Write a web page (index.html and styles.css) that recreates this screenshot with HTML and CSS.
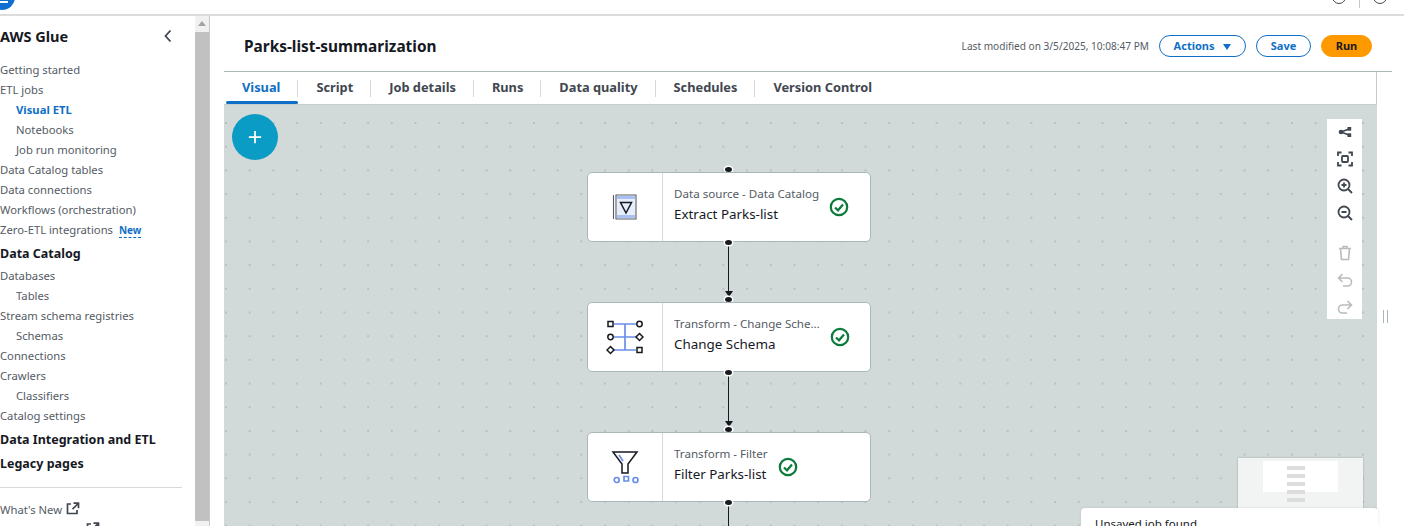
FILE: index.html
```html
<!DOCTYPE html>
<html>
<head>
    <title>AWS Glue - Parks-list-summarization</title>
    <link rel="stylesheet" href="styles.css">
</head>
<body>
    <!-- Top bar, cut off by the screenshot -->
    <header class="top-bar">
        <span class="top-logo"></span>
        <div class="top-icons">
            <span class="top-icon"></span>
            <span class="top-sep"></span>
            <span class="top-icon"></span>
        </div>
    </header>

    <div class="app">
        <nav class="sidebar">
            <div class="side-title">
                <span>AWS Glue</span>
                <svg class="side-close" viewBox="0 0 10 14"><path d="M7.5 1.5 2.5 7l5 5.5"/></svg>
            </div>
            <a class="nav-row">Getting started</a>
            <a class="nav-row">ETL jobs</a>
            <a class="nav-row sub active">Visual ETL</a>
            <a class="nav-row sub">Notebooks</a>
            <a class="nav-row sub">Job run monitoring</a>
            <a class="nav-row">Data Catalog tables</a>
            <a class="nav-row">Data connections</a>
            <a class="nav-row">Workflows (orchestration)</a>
            <a class="nav-row">Zero-ETL integrations <span class="new-tag">New</span></a>
            <div class="nav-head">Data Catalog</div>
            <a class="nav-row">Databases</a>
            <a class="nav-row sub">Tables</a>
            <a class="nav-row">Stream schema registries</a>
            <a class="nav-row sub">Schemas</a>
            <a class="nav-row">Connections</a>
            <a class="nav-row">Crawlers</a>
            <a class="nav-row sub">Classifiers</a>
            <a class="nav-row">Catalog settings</a>
            <div class="nav-head">Data Integration and ETL</div>
            <div class="nav-head short">Legacy pages</div>
            <hr class="side-rule">
            <a class="nav-row">What's New
                <svg class="ext-icon" viewBox="0 0 14 13"><path d="M5 2H1.5v9.5H11V8"/><path d="M7.5 1.2h5v5M12.2 1.5 6.5 7.2"/></svg>
            </a>
            <a class="nav-row">Documentation
                <svg class="ext-icon" viewBox="0 0 14 13"><path d="M5 2H1.5v9.5H11V8"/><path d="M7.5 1.2h5v5M12.2 1.5 6.5 7.2"/></svg>
            </a>
        </nav>

        <div class="scrollbar">
            <div class="scroll-up"></div>
            <div class="scroll-thumb"></div>
        </div>

        <main class="main">
            <div class="page-head">
                <h1>Parks-list-summarization</h1>
                <div class="head-actions">
                    <span class="modified">Last modified on 3/5/2025, 10:08:47 PM</span>
                    <button class="btn actions-btn">Actions <span class="caret"></span></button>
                    <button class="btn save-btn">Save</button>
                    <button class="btn run-btn">Run</button>
                </div>
            </div>

            <div class="tabs">
                <a class="tab active">Visual</a>
                <a class="tab">Script</a>
                <a class="tab">Job details</a>
                <a class="tab">Runs</a>
                <a class="tab">Data quality</a>
                <a class="tab">Schedules</a>
                <a class="tab last">Version Control</a>
            </div>

            <div class="canvas">
                <button class="add-btn">
                    <svg viewBox="0 0 16 16"><path d="M8 1v14M1 8h14"/></svg>
                </button>

                <div class="flow">
                    <div class="link stub"><span class="handle in"></span></div>

                    <div class="node">
                        <div class="node-icon">
                            <svg width="26" height="28" viewBox="0 0 26 28">
                                <path class="ic-blue-fill" d="M5 3h18v3H5zM5 22h18v3H5z"/>
                                <path class="ic-blue-soft" d="M5 6h18v16H5z"/>
                                <path class="ic-gray" d="M4 2h20v24H4zM1.500 2v24"/>
                                <path class="ic-dark" d="M8.500 9.500h11L14 20z"/>
                            </svg>
                        </div>
                        <div class="node-body">
                            <div class="node-text">
                                <div class="node-type">Data source - Data Catalog</div>
                                <div class="node-name">Extract Parks-list</div>
                            </div>
                            <svg class="status" viewBox="0 0 20 20"><circle cx="10" cy="10" r="8.200"/><path d="M6 10.500 9 13.300 14 7.500"/></svg>
                        </div>
                    </div>

                    <div class="link"><span class="handle out"></span><span class="arrow"></span><span class="handle in"></span></div>

                    <div class="node">
                        <div class="node-icon">
                            <svg width="38" height="36" viewBox="0 0 38 36">
                                <path class="ic-blue" d="M8 5h22M8 18h22M8 31h22M19 5v26"/>
                                <path class="ic-dark" d="M2 2.500h5v5H2z"/>
                                <circle class="ic-dark" cx="4.500" cy="18" r="2.700"/>
                                <path class="ic-dark" d="M4.500 27.500 8 31l-3.500 3.500L1 31z"/>
                                <circle class="ic-dark" cx="33.500" cy="5" r="2.700"/>
                                <path class="ic-dark" d="M33.500 14.500 37 18l-3.500 3.500L30 18z"/>
                                <path class="ic-dark" d="M31 28.500h5v5h-5z"/>
                            </svg>
                        </div>
                        <div class="node-body">
                            <div class="node-text">
                                <div class="node-type">Transform - Change Schema</div>
                                <div class="node-name">Change Schema</div>
                            </div>
                            <svg class="status" viewBox="0 0 20 20"><circle cx="10" cy="10" r="8.200"/><path d="M6 10.500 9 13.300 14 7.500"/></svg>
                        </div>
                    </div>

                    <div class="link"><span class="handle out"></span><span class="arrow"></span><span class="handle in"></span></div>

                    <div class="node">
                        <div class="node-icon">
                            <svg width="28" height="36" viewBox="0 0 28 36">
                                <path class="ic-dark" d="M2 3h24l-9 12v9h-6V15z"/>
                                <path class="ic-blue" d="M8 6l4 6"/>
                                <circle class="ic-blue" cx="5.700" cy="31" r="2.500"/>
                                <path class="ic-blue" d="M13 27.500h4.500V32H13z"/>
                                <circle class="ic-blue" cx="24.500" cy="31" r="2.500"/>
                            </svg>
                        </div>
                        <div class="node-body">
                            <div class="node-text">
                                <div class="node-type">Transform - Filter</div>
                                <div class="node-name">Filter Parks-list</div>
                            </div>
                            <svg class="status" viewBox="0 0 20 20"><circle cx="10" cy="10" r="8.200"/><path d="M6 10.500 9 13.300 14 7.500"/></svg>
                        </div>
                    </div>

                    <div class="link end"><span class="handle out"></span></div>
                </div>

                <div class="toolbar">
                    <svg class="tool" viewBox="0 0 16 16"><path d="M4 8l8-3M4 8l8 3"/><circle class="solid" cx="4" cy="8" r="2.300"/><rect class="solid" x="10.500" y="3" width="3.700" height="3.700"/><rect class="solid" x="10.500" y="9.300" width="3.700" height="3.700"/></svg>
                    <svg class="tool" viewBox="0 0 16 16"><path d="M1 5V1.500h3.500M11.500 1.500H15V5M15 11v3.500h-3.500M4.500 14.500H1V11"/><rect x="5" y="5" width="6" height="6" rx="1"/></svg>
                    <svg class="tool" viewBox="0 0 16 16"><circle cx="7" cy="7" r="5.500"/><path d="M11 11l4 4M7 4.500v5M4.500 7h5"/></svg>
                    <svg class="tool" viewBox="0 0 16 16"><circle cx="7" cy="7" r="5.500"/><path d="M11 11l4 4M4.500 7h5"/></svg>
                    <svg class="tool off gap" viewBox="0 0 16 16"><path d="M2 3.500h12M6 3.500V1.500h4v2M3.500 3.500l1 11h7l1-11"/></svg>
                    <svg class="tool off" viewBox="0 0 16 16"><path d="M5.500 2 1.500 6l4 4M1.500 6h9a4 4 0 0 1 0 8H6"/></svg>
                    <svg class="tool off" viewBox="0 0 16 16"><path d="M10.500 2l4 4-4 4M14.500 6h-9a4 4 0 0 0 0 8H10"/></svg>
                </div>

                <div class="minimap">
                    <div class="mini-view"></div>
                    <div class="mini-rows">
                        <span></span><span></span><span></span><span></span><span></span>
                    </div>
                </div>
            </div>

            <div class="side-handle"></div>

            <div class="flash">Unsaved job found</div>
        </main>
    </div>
</body>
</html>
```

FILE: styles.css
```css
* {
    box-sizing: border-box;
}

html, body {
    height: 528px;
}

body {
    margin: 0;
    overflow: hidden;
    background-color: #fff;
    color: #16191f;
    font-family: 'Noto Sans', sans-serif;
    font-size: 12px;
}

/* Top bar */
.top-bar {
    height: 16px;
    border-bottom: 2px solid #dcdcdc;
    display: flex;
    justify-content: space-between;
    overflow: hidden;
}

.top-logo {
    width: 26px;
    height: 26px;
    margin: -16px 0 0 -11px;
    border-radius: 50%;
    background-color: #0f6fd0;
    position: relative;
}

.top-logo::after {
    content: "";
    position: absolute;
    left: 10px;
    right: 7px;
    bottom: 7px;
    height: 2px;
    background-color: #fff;
}

.top-icons {
    display: flex;
    gap: 12px;
    margin-right: 17px;
}

.top-icon {
    width: 14px;
    height: 14px;
    margin-top: -10px;
    border: 1.5px solid #414750;
    border-radius: 50%;
}

.top-sep {
    width: 1px;
    height: 8px;
    margin: 0 1px;
    background-color: #c6c6cd;
}

.app {
    display: flex;
    height: 510px;
    overflow: hidden;
}

/* Sidebar */
.sidebar {
    width: 195px;
    flex-shrink: 0;
    overflow: hidden;
    color: #545b64;
}

.side-title {
    height: 44px;
    padding: 0 22px 4px 0;
    display: flex;
    align-items: center;
    justify-content: space-between;
    font-size: 14.5px;
    font-weight: 700;
    color: #16191f;
}

.side-close {
    width: 10px;
    height: 14px;
    fill: none;
    stroke: #414750;
    stroke-width: 1.8;
}

.nav-row {
    display: block;
    height: 20px;
    line-height: 20px;
    font-size: 11.25px;
    white-space: nowrap;
}

.nav-row.sub {
    padding-left: 16px;
}

.nav-row.active {
    color: #0f6fc6;
    font-weight: 700;
}

.new-tag {
    margin-left: 3px;
    color: #0f6fc6;
    font-size: 10px;
    font-weight: 700;
    border-bottom: 1px dashed #0f6fc6;
}

.nav-head {
    height: 26px;
    line-height: 27px;
    font-size: 12.5px;
    font-weight: 700;
    color: #16191f;
}

.nav-head.short {
    height: 24px;
    line-height: 23px;
}

.side-rule {
    width: 182px;
    height: 1px;
    margin: 11px 0 12px;
    border: none;
    background-color: #d5dbdb;
}

.ext-icon {
    width: 14px;
    height: 13px;
    margin-left: 1px;
    vertical-align: -1px;
    fill: none;
    stroke: #414750;
    stroke-width: 1.7;
}

/* Scrollbar */
.scrollbar {
    width: 15px;
    flex-shrink: 0;
    background-color: #f1f1f1;
    border-right: 1px solid #c8c8c8;
}

.scroll-up {
    height: 16px;
    position: relative;
}

.scroll-up::after {
    content: "";
    position: absolute;
    left: 3px;
    top: 5px;
    border: 4px solid transparent;
    border-top: none;
    border-bottom: 5px solid #a3a3a3;
}

.scroll-thumb {
    height: 489px;
    background-color: #c1c1c1;
}

/* Main area */
.main {
    flex: 1;
    position: relative;
    min-width: 0;
}

.page-head {
    width: 1168px;
    height: 56px;
    margin-left: 14px;
    padding: 4px 20px 0;
    border-bottom: 1px solid #aab7b8;
    display: flex;
    align-items: center;
    justify-content: space-between;
}

.page-head h1 {
    margin: 1px 0 0;
    font-size: 15.4px;
    font-weight: 700;
    color: #16191f;
}

.head-actions {
    display: flex;
    align-items: center;
    gap: 10px;
}

.modified {
    font-size: 10.1px;
    color: #545b64;
}

.btn {
    height: 22px;
    border: 1.5px solid #0f6fc6;
    border-radius: 11px;
    background-color: #fff;
    color: #0f6fc6;
    font-family: inherit;
    font-size: 11px;
    font-weight: 700;
    padding: 0;
}

.actions-btn {
    width: 87px;
}

.caret {
    display: inline-block;
    margin-left: 6px;
    border: 4.500px solid transparent;
    border-bottom: none;
    border-top: 6px solid #0f6fc6;
}

.save-btn {
    width: 55px;
}

.run-btn {
    width: 51px;
    border-color: #ff9900;
    background-color: #ff9900;
    color: #16191f;
}

.tabs {
    width: 1153px;
    height: 33px;
    margin-left: 14px;
    border-right: 1px solid #c8c8c8;
    border-bottom: 1px solid #c8cdcd;
    display: flex;
    align-items: center;
}

.tab {
    height: 32px;
    padding: 0 18px;
    line-height: 30px;
    font-size: 12.8px;
    font-weight: 700;
    color: #414750;
    position: relative;
}

.tab::after {
    content: "";
    position: absolute;
    right: 0;
    top: 8px;
    width: 1px;
    height: 17px;
    background-color: #d5dbdb;
}

.tab.last::after {
    display: none;
}

.tab.active {
    color: #0f6fc6;
}

.tab.active::before {
    content: "";
    position: absolute;
    left: 2px;
    right: 0;
    bottom: 0;
    height: 3px;
    border-radius: 2px;
    background-color: #0f6fc6;
}

/* Canvas */
.canvas {
    width: 1153px;
    height: 421px;
    margin-left: 14px;
    position: relative;
    overflow: hidden;
    background-color: #d2d9d9;
    background-image: radial-gradient(circle at 1px 1px, #b8c0c0 0.7px, transparent 1px);
    background-size: 23.7px 23.7px;
    background-position: 1px 17px;
}

.add-btn {
    position: absolute;
    left: 8px;
    top: 9px;
    width: 46px;
    height: 46px;
    padding: 0;
    border: none;
    border-radius: 50%;
    background-color: #0a9cc4;
    display: flex;
    align-items: center;
    justify-content: center;
}

.add-btn svg {
    width: 14px;
    height: 14px;
    fill: none;
    stroke: #fff;
    stroke-width: 2;
}

.flow {
    width: 284px;
    margin-left: 363px;
    padding-top: 62px;
}

.node {
    height: 70px;
    display: flex;
    position: relative;
    background-color: #fff;
    border: 1.5px solid #aab7b8;
    border-radius: 5px;
}

.node-icon {
    width: 75px;
    flex-shrink: 0;
    border-right: 1px solid #d5dbdb;
    display: flex;
    align-items: center;
    justify-content: center;
}

.node-icon svg {
    fill: none;
    stroke-width: 1.5;
}

.ic-dark {
    stroke: #16191f;
}

.ic-gray {
    stroke: #545b64;
    stroke-width: 1.1;
}

.ic-blue {
    stroke: #6a8ee8;
    stroke-width: 1.7;
}

.ic-blue-fill {
    fill: #a9c1f0;
}

.ic-blue-soft {
    fill: #e6edfb;
}

.node-body {
    flex: 1;
    min-width: 0;
    padding: 0 0 5px 11px;
    display: flex;
    align-items: center;
    gap: 10px;
}

.node-text {
    max-width: 146px;
}

.node-type {
    font-size: 11.6px;
    line-height: 20px;
    color: #545b64;
    white-space: nowrap;
    overflow: hidden;
    text-overflow: ellipsis;
}

.node-name {
    font-size: 13.4px;
    line-height: 21px;
    color: #16191f;
    white-space: nowrap;
}

.status {
    width: 20px;
    height: 20px;
    margin-top: 5px;
    flex-shrink: 0;
    fill: none;
    stroke: #0b7a3a;
    stroke-width: 2.2;
}

.link {
    height: 60px;
    position: relative;
}

.link::before {
    content: "";
    position: absolute;
    left: 141px;
    top: 0;
    bottom: 8px;
    width: 1px;
    background-color: #16191f;
}

.link.stub {
    height: 5px;
}

.link.stub::before {
    display: none;
}

.link.end {
    height: 40px;
}

.link.end::before {
    bottom: 0;
}

.handle {
    position: absolute;
    left: 138px;
    width: 7px;
    height: 5px;
    border-radius: 50%;
    background-color: #16191f;
    box-shadow: 0 0 0 1.500px #fff;
}

.handle.out {
    top: -2px;
}

.handle.in {
    bottom: 0;
}

.arrow {
    position: absolute;
    left: 138px;
    bottom: 5px;
    border: 4px solid transparent;
    border-bottom: none;
    border-top: 6px solid #16191f;
}

/* Canvas toolbar */
.toolbar {
    position: absolute;
    left: 1103px;
    top: 14px;
    width: 35px;
    height: 200px;
    padding-top: 5px;
    background-color: #fff;
    display: flex;
    flex-direction: column;
    align-items: center;
    gap: 11px;
}

.tool {
    width: 16px;
    height: 16px;
    flex-shrink: 0;
    fill: none;
    stroke: #414750;
    stroke-width: 1.8;
}

.tool .solid {
    fill: #414750;
    stroke: none;
}

.tool.off {
    stroke: #b8bcbc;
    stroke-width: 1.6;
}

.tool.gap {
    margin-top: 13px;
}

/* Minimap */
.minimap {
    position: absolute;
    left: 1014px;
    top: 353px;
    width: 125px;
    height: 68px;
    background-color: #f2f3f3;
    box-shadow: 0 0 2px rgba(0, 0, 0, 0.25);
}

.mini-view {
    position: absolute;
    left: 25px;
    top: 3px;
    width: 75px;
    height: 31px;
    background-color: #fff;
}

.mini-rows {
    position: absolute;
    left: 49px;
    top: 8px;
    width: 18px;
    display: flex;
    flex-direction: column;
    gap: 4px;
}

.mini-rows span {
    height: 4px;
    background-color: #dddddd;
}

.side-handle {
    position: absolute;
    left: 1173px;
    top: 294px;
    width: 5px;
    height: 13px;
    border-left: 1px solid #aab7b8;
    border-right: 1px solid #aab7b8;
}

.flash {
    position: absolute;
    left: 871px;
    top: 492px;
    width: 297px;
    height: 60px;
    padding: 6px 14px;
    border-radius: 4px 4px 0 0;
    background-color: #fff;
    box-shadow: 0 0 3px rgba(0, 0, 0, 0.1);
    font-size: 11.5px;
    line-height: 20px;
    color: #16191f;
}
```
